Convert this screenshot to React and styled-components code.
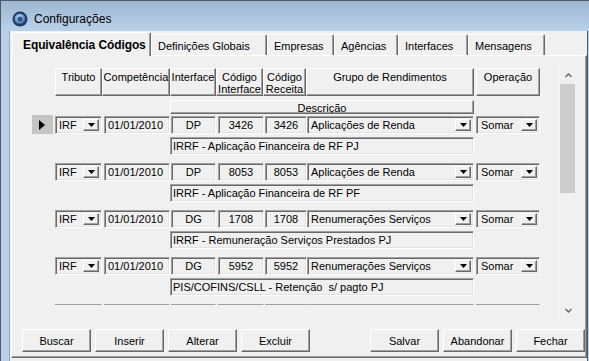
import styled, { createGlobalStyle } from "styled-components";

const Global = createGlobalStyle`
  html, body {
    margin: 0;
    padding: 0;
    background: #f0f0f0;
    overflow: hidden;
  }
  * { box-sizing: border-box; }
`;

const ui = `
  font-family: "Liberation Sans", Arial, sans-serif;
  font-size: 11px;
  color: #000;
`;

const Window = styled.div`
  width: 589px;
  height: 361px;
  display: flex;
  flex-direction: column;
  border-top: 1px solid #505a66;
  border-left: 1px solid #505a66;
  background: #b9d1ea;
  ${ui}
`;

const TitleBar = styled.div`
  height: 30px;
  display: flex;
  align-items: center;
  gap: 6px;
  padding: 6px 0 0 11px;
  background: linear-gradient(#9fb6d0, #b9d1ea);
`;

const TitleText = styled.span`
  font-family: "Liberation Sans", Arial, sans-serif;
  font-size: 12px;
  color: #000;
`;

const Body = styled.div`
  flex: 1;
  display: flex;
  padding-left: 8px;
  min-height: 0;
`;

const Client = styled.div`
  flex: 1;
  display: flex;
  flex-direction: column;
  background: #f0f0f0;
  border-left: 1px solid #9aa7b6;
  border-right: 1px solid #505a66;
  margin-right: 1px;
  min-height: 0;
`;

const TabStrip = styled.div`
  height: 24px;
  display: flex;
  align-items: flex-end;
  padding-left: 2px;
`;

const Tab = styled.div`
  width: ${(p) => p.$w}px;
  height: ${(p) => (p.$active ? 24 : 21)}px;
  margin-bottom: ${(p) => (p.$active ? -1 : 0)}px;
  padding: ${(p) => (p.$active ? "5px 0 0 10px" : "5px 0 0 6px")};
  background: #f0f0f0;
  border-top: 1px solid #fff;
  border-left: 1px solid #fff;
  border-right: 1px solid #696969;
  box-shadow: inset -1px 0 #a0a0a0;
  border-radius: 2px 2px 0 0;
  font-size: ${(p) => (p.$active ? "12px" : "11px")};
  font-weight: ${(p) => (p.$active ? 700 : 400)};
  letter-spacing: ${(p) => (p.$active ? "-0.1px" : "0")};
  white-space: nowrap;
  position: relative;
  z-index: ${(p) => (p.$active ? 1 : 0)};
`;

const Panel = styled.div`
  height: 303px;
  margin-left: 1px;
  display: flex;
  flex-direction: column;
  border-top: 1px solid #fff;
  border-left: 1px solid #fff;
  border-right: 1px solid #696969;
  border-bottom: 1px solid #696969;
  box-shadow: inset -1px -1px #a0a0a0;
  padding-top: 10px;
`;

const ScrollArea = styled.div`
  display: flex;
  align-items: flex-start;
  margin-left: 20px;
`;

const Content = styled.div`
  width: 516px;
  height: 239px;
  overflow: hidden;
  padding-top: 2px;
`;

const HeaderRow = styled.div`
  display: flex;
  height: 28px;
  margin-left: 23px;
`;

const HeadCell = styled.div`
  width: ${(p) => p.$w}px;
  margin-left: ${(p) => p.$ml || 0}px;
  height: ${(p) => p.$h || 28}px;
  background: #f0f0f0;
  border: 1px solid;
  border-color: #fff #696969 #696969 #fff;
  box-shadow: inset -1px -1px #a0a0a0;
  text-align: center;
  line-height: 12px;
  padding-top: ${(p) => p.$pt ?? 2}px;
  white-space: nowrap;
  overflow: hidden;
`;

const DescHead = styled(HeadCell)`
  margin: 4px 0 0 138px;
`;

const Record = styled.div`
  display: flex;
  flex-direction: column;
  gap: 3px;
  margin-top: ${(p) => p.$mt}px;
`;

const Line = styled.div`
  display: flex;
  align-items: flex-start;
  height: 18px;
`;

const IndicatorSlot = styled.div`
  width: 23px;
  flex-shrink: 0;
`;

const Indicator = styled.div`
  width: 21px;
  height: 19px;
  margin-top: -1px;
  background: #c4c4c4;
  display: flex;
  align-items: center;
  justify-content: center;
  padding-right: 2px;
`;

const Sunken = styled.div`
  width: ${(p) => p.$w}px;
  margin-left: ${(p) => p.$ml || 0}px;
  height: 18px;
  flex-shrink: 0;
  background: #f0f0f0;
  border: 1px solid;
  border-color: #a0a0a0 #fff #fff #a0a0a0;
  box-shadow: inset 1px 1px #696969, inset -1px -1px #e3e3e3;
  line-height: 16px;
  padding: 0 ${(p) => p.$px ?? 2}px;
  text-align: ${(p) => p.$align || "left"};
  white-space: pre;
  overflow: hidden;
`;

const Combo = styled(Sunken)`
  display: flex;
  align-items: center;
  padding: 0 2px 0 ${(p) => p.$pl || 3}px;
`;

const ComboText = styled.span`
  flex: 1;
  line-height: 16px;
  white-space: nowrap;
  overflow: hidden;
`;

const DropBtn = styled.div`
  width: 16px;
  height: 12px;
  flex-shrink: 0;
  background: #f0f0f0;
  border: 1px solid;
  border-color: #fff #696969 #696969 #fff;
  box-shadow: inset -1px -1px #a0a0a0;
  display: flex;
  align-items: center;
  justify-content: center;
`;

const Desc = styled(Sunken)`
  margin-left: 138px;
  width: 304px;
  padding-left: 2px;
`;

const ScrollBar = styled.div`
  width: 17px;
  height: 252px;
  margin-left: 11px;
  display: flex;
  flex-direction: column;
  border-left: 1px solid #f8f8f8;
  background: #f0f0f0;
`;

const Arrow = styled.div`
  height: 17px;
  display: flex;
  align-items: center;
  justify-content: center;
  padding-top: ${(p) => p.$pt || 0}px;
`;

const Track = styled.div`
  flex: 1;
  padding: 1px 1px 0 0;
`;

const Thumb = styled.div`
  height: 109px;
  background: #cdcdcd;
`;

const ButtonBar = styled.div`
  display: flex;
  justify-content: space-between;
  margin-top: 11px;
  padding: 0 1px 0 10px;
`;

const Group = styled.div`
  display: flex;
  gap: 4px;
`;

const Button = styled.button`
  width: 69px;
  height: 23px;
  padding: 0;
  background: #f0f0f0;
  border: 1px solid;
  border-color: #fff #696969 #696969 #fff;
  box-shadow: inset -1px -1px #a0a0a0;
  ${ui}
`;

const TitleIcon = () => (
  <svg width="16" height="16" viewBox="0 0 16 16">
    <defs>
      <radialGradient id="orb" cx="45%" cy="40%" r="60%">
        <stop offset="0" stopColor="#e9f3ff" />
        <stop offset="0.55" stopColor="#7fa9d8" />
        <stop offset="1" stopColor="#23467c" />
      </radialGradient>
    </defs>
    <circle cx="8" cy="8" r="7.5" fill="#1c3764" />
    <circle cx="8" cy="8" r="5.6" fill="url(#orb)" />
    <circle cx="8" cy="8" r="2.6" fill="#2d5791" />
  </svg>
);

const DownTri = () => (
  <svg width="7" height="4" viewBox="0 0 7 4">
    <path d="M0 0h7L3.5 4z" fill="#000" />
  </svg>
);

const Chevron = ({ up }) => (
  <svg width="7" height="5" viewBox="0 0 7 5">
    <path
      d={up ? "M0.5 4L3.5 1l3 3" : "M0.5 1L3.5 4l3-3"}
      fill="none"
      stroke="#606060"
      strokeWidth="1.3"
    />
  </svg>
);

const tabs = [
  { label: "Equivalência Códigos", w: 139, active: true },
  { label: "Definições Globais", w: 116 },
  { label: "Empresas", w: 67 },
  { label: "Agências", w: 64 },
  { label: "Interfaces", w: 70 },
  { label: "Mensagens", w: 77 },
];

const records = [
  { iface: "DP", cod: "3426", grupo: "Aplicações de Renda", desc: "IRRF - Aplicação Financeira de RF PJ" },
  { iface: "DP", cod: "8053", grupo: "Aplicações de Renda", desc: "IRRF - Aplicação Financeira de RF PF" },
  { iface: "DG", cod: "1708", grupo: "Renumerações Serviços", desc: "IRRF - Remuneração Serviços Prestados PJ" },
  { iface: "DG", cod: "5952", grupo: "Renumerações Serviços", desc: "PIS/COFINS/CSLL - Retenção  s/ pagto PJ" },
  { iface: "DG", cod: "", grupo: "", desc: "" },
];

export default function App() {
  return (
    <>
      <Global />
      <Window>
        <TitleBar>
          <TitleIcon />
          <TitleText>Configurações</TitleText>
        </TitleBar>
        <Body>
          <Client>
            <TabStrip>
              {tabs.map((t) => (
                <Tab key={t.label} $w={t.w} $active={t.active}>
                  {t.label}
                </Tab>
              ))}
            </TabStrip>
            <Panel>
              <ScrollArea>
                <Content>
                  <HeaderRow>
                    <HeadCell $w={47}>Tributo</HeadCell>
                    <HeadCell $w={68}>Competência</HeadCell>
                    <HeadCell $w={46}>Interface</HeadCell>
                    <HeadCell $w={47}>
                      Código
                      <br />
                      Interface
                    </HeadCell>
                    <HeadCell $w={43}>
                      Código
                      <br />
                      Receita
                    </HeadCell>
                    <HeadCell $w={168}>Grupo de Rendimentos</HeadCell>
                    <HeadCell $w={64} $ml={2}>
                      Operação
                    </HeadCell>
                  </HeaderRow>
                  <DescHead $w={304} $h={14} $pt={1}>
                    Descrição
                  </DescHead>
                  {records.map((r, i) => (
                    <Record key={i} $mt={i === 0 ? 2 : 8}>
                      <Line>
                        <IndicatorSlot>
                          {i === 0 && (
                            <Indicator>
                              <svg width="6" height="10" viewBox="0 0 6 10">
                                <path d="M0 0l6 5-6 5z" fill="#000" />
                              </svg>
                            </Indicator>
                          )}
                        </IndicatorSlot>
                        <Combo $w={47}>
                          <ComboText>{r.cod && "IRF"}</ComboText>
                          {r.cod && (
                            <DropBtn>
                              <DownTri />
                            </DropBtn>
                          )}
                        </Combo>
                        <Sunken $w={66} $ml={2} $px={3}>
                          {r.cod && "01/01/2010"}
                        </Sunken>
                        <Sunken $w={45} $ml={1} $align="center">
                          {r.cod && r.iface}
                        </Sunken>
                        <Sunken $w={46} $ml={2} $align="center">
                          {r.cod}
                        </Sunken>
                        <Sunken $w={42} $ml={1} $align="center">
                          {r.cod}
                        </Sunken>
                        <Combo $w={167}>
                          <ComboText>{r.grupo}</ComboText>
                          {r.cod && (
                            <DropBtn>
                              <DownTri />
                            </DropBtn>
                          )}
                        </Combo>
                        <Combo $w={64} $ml={2} $pl={4}>
                          <ComboText>{r.cod && "Somar"}</ComboText>
                          {r.cod && (
                            <DropBtn>
                              <DownTri />
                            </DropBtn>
                          )}
                        </Combo>
                      </Line>
                      <Desc>{r.desc}</Desc>
                    </Record>
                  ))}
                </Content>
                <ScrollBar>
                  <Arrow $pt={1}>
                    <Chevron up />
                  </Arrow>
                  <Track>
                    <Thumb />
                  </Track>
                  <Arrow $pt={2}>
                    <Chevron />
                  </Arrow>
                </ScrollBar>
              </ScrollArea>
              <ButtonBar>
                <Group>
                  <Button>Buscar</Button>
                  <Button>Inserir</Button>
                  <Button>Alterar</Button>
                  <Button>Excluir</Button>
                </Group>
                <Group>
                  <Button>Salvar</Button>
                  <Button>Abandonar</Button>
                  <Button>Fechar</Button>
                </Group>
              </ButtonBar>
            </Panel>
          </Client>
        </Body>
      </Window>
    </>
  );
}
